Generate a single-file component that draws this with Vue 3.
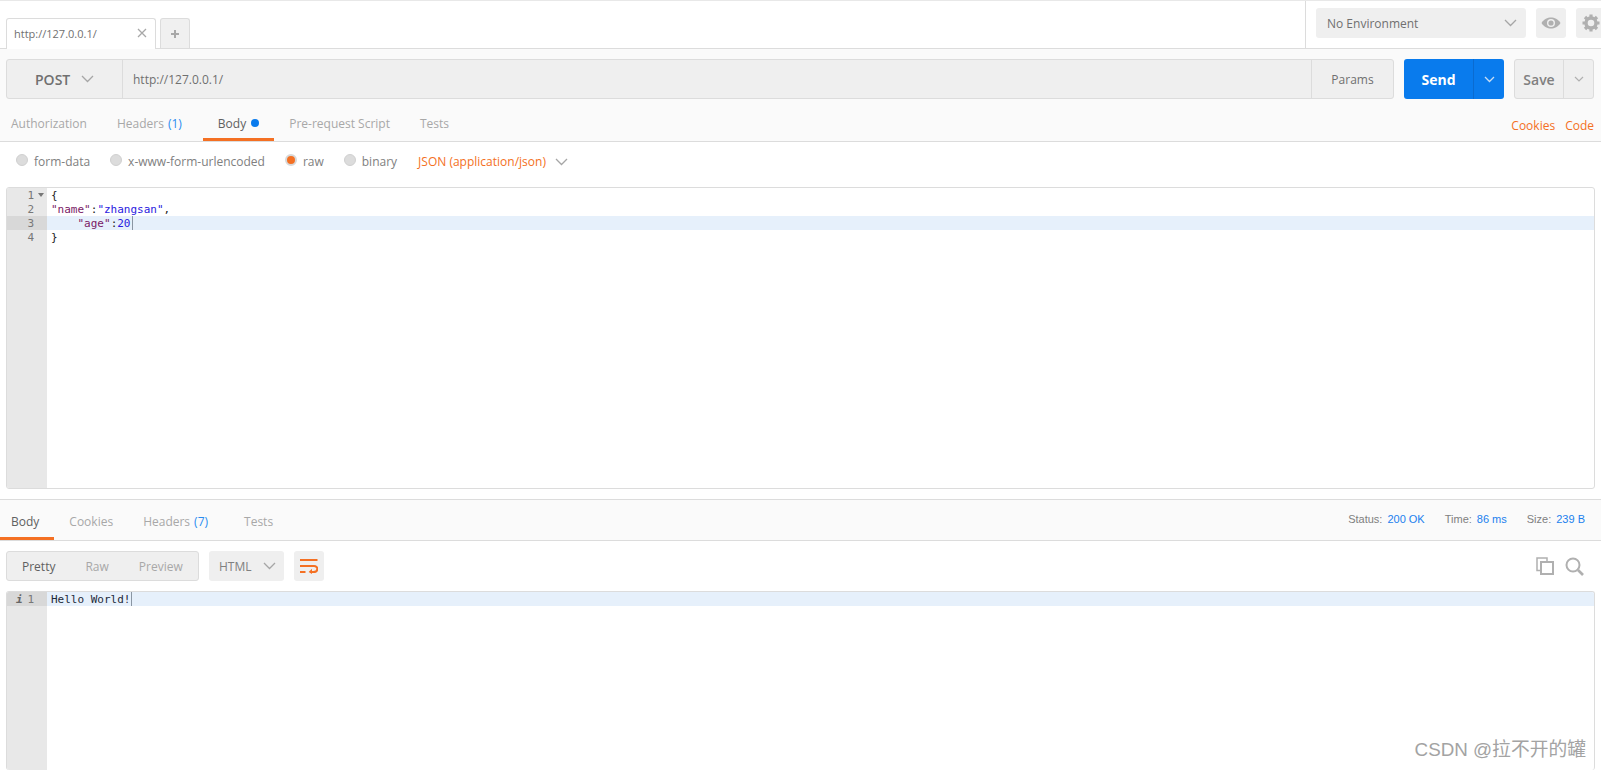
<script setup>
const reqTabs = [
  { label: 'Authorization' },
  { label: 'Headers', count: '(1)' },
  { label: 'Body', dot: true, active: true },
  { label: 'Pre-request Script' },
  { label: 'Tests' }
]
const bodyTypes = [
  { label: 'form-data' },
  { label: 'x-www-form-urlencoded' },
  { label: 'raw', on: true },
  { label: 'binary' }
]
const resTabs = [
  { label: 'Body', active: true },
  { label: 'Cookies' },
  { label: 'Headers', count: '(7)' },
  { label: 'Tests' }
]
const stats = [
  { k: 'Status:', v: '200 OK' },
  { k: 'Time:', v: '86 ms' },
  { k: 'Size:', v: '239 B' }
]
</script>

<template>
  <div class="app">
    <header class="topbar">
      <div class="tabstrip">
        <div class="tab">
          <span class="tab-title">http://127.0.0.1/</span>
          <svg class="tab-x" width="10" height="10" viewBox="0 0 10 10"><path d="M1 1l8 8M9 1l-8 8" stroke="#a8a8a8" stroke-width="1.3" fill="none"/></svg>
        </div>
        <div class="tab-add">
          <svg width="10" height="10" viewBox="0 0 10 10"><path d="M5 1v8M1 5h8" stroke="#a8a8a8" stroke-width="2" fill="none"/></svg>
        </div>
      </div>
      <div class="envbar">
        <div class="env">
          <span>No Environment</span>
          <svg width="13" height="8" viewBox="0 0 13 8"><path d="M1 1l5.5 5.5L12 1" stroke="#a6a6a6" stroke-width="1.3" fill="none"/></svg>
        </div>
        <div class="sq">
          <svg width="20" height="12" viewBox="0 0 20 12"><path d="M0.500 6C3 2 6.500 0.500 10 0.500S17 2 19.500 6C17 10 13.500 11.500 10 11.500S3 10 0.500 6Z" fill="#b0b0b0"/><circle cx="10" cy="6" r="4" fill="#efefef"/><circle cx="10" cy="6" r="2.600" fill="#b0b0b0"/></svg>
        </div>
        <div class="sq gear">
          <svg width="18" height="18" viewBox="0 0 18 18"><circle cx="9" cy="9" r="5" fill="none" stroke="#b0b0b0" stroke-width="3.400"/><g stroke="#b0b0b0" stroke-width="3.200"><path d="M9 0.500v3M9 14.500v3M0.500 9h3M14.500 9h3M3 3l2 2M13 13l2 2M15 3l-2 2M5 13l-2 2"/></g></svg>
        </div>
      </div>
    </header>

    <section class="request">
      <div class="urlrow">
        <div class="urlbox">
          <div class="method">
            <span>POST</span>
            <svg width="13" height="8" viewBox="0 0 13 8"><path d="M1 1l5.500 5.500L12 1" stroke="#a6a6a6" stroke-width="1.300" fill="none"/></svg>
          </div>
          <div class="url">http://127.0.0.1/</div>
          <div class="params">Params</div>
        </div>
        <div class="send">
          <span class="send-main">Send</span>
          <span class="send-more">
            <svg width="11" height="7" viewBox="0 0 11 7"><path d="M1 1l4.500 4.500L10 1" stroke="#c9ddf3" stroke-width="1.300" fill="none"/></svg>
          </span>
        </div>
        <div class="save">
          <span class="save-main">Save</span>
          <span class="save-more">
            <svg width="10" height="6" viewBox="0 0 10 6"><path d="M1 1l4 4 4-4" stroke="#b0b0b0" stroke-width="1.200" fill="none"/></svg>
          </span>
        </div>
      </div>
      <nav class="tabs req-tabs">
        <div v-for="t in reqTabs" :key="t.label" class="tb" :class="{ active: t.active }">
          {{ t.label }}
          <span v-if="t.count" class="count">{{ t.count }}</span>
          <i v-if="t.dot" class="dot"></i>
        </div>
        <div class="links"><span>Cookies</span><span>Code</span></div>
      </nav>
    </section>

    <div class="options">
      <label v-for="b in bodyTypes" :key="b.label" class="radio">
        <i class="circle" :class="{ on: b.on }"></i>{{ b.label }}
      </label>
      <span class="json">JSON (application/json)</span>
      <svg width="13" height="8" viewBox="0 0 13 8"><path d="M1 1l5.500 5.500L12 1" stroke="#a6a6a6" stroke-width="1.300" fill="none"/></svg>
    </div>

    <div class="editor req-editor">
      <div class="gutter">
        <div class="gl">1<svg class="fold" width="6" height="4" viewBox="0 0 6 4"><path d="M0 0h6L3 4Z" fill="#777"/></svg></div>
        <div class="gl">2</div>
        <div class="gl cur">3</div>
        <div class="gl">4</div>
      </div>
      <div class="code">
        <div class="ln">{</div>
        <div class="ln"><span class="key">"name"</span>:<span class="str">"zhangsan"</span>,</div>
        <div class="ln cur"><span class="indent"></span><span class="key">"age"</span>:<span class="num">20</span><i class="caret"></i></div>
        <div class="ln">}</div>
      </div>
    </div>

    <section class="resp-head">
      <nav class="tabs res-tabs">
        <div v-for="t in resTabs" :key="t.label" class="tb" :class="{ active: t.active }">
          {{ t.label }}
          <span v-if="t.count" class="count">{{ t.count }}</span>
        </div>
        <div class="stats">
          <span v-for="s in stats" :key="s.k" class="stat"><span class="k">{{ s.k }}</span><span class="v">{{ s.v }}</span></span>
        </div>
      </nav>
    </section>

    <div class="toolbar">
      <div class="seg">
        <span class="sel">Pretty</span><span>Raw</span><span>Preview</span>
      </div>
      <div class="lang">
        <span>HTML</span>
        <svg width="13" height="8" viewBox="0 0 13 8"><path d="M1 1l5.500 5.500L12 1" stroke="#a6a6a6" stroke-width="1.300" fill="none"/></svg>
      </div>
      <div class="wrap">
        <svg width="18" height="15" viewBox="0 0 18 15"><path d="M0 1h17.500M0 7h14M0 13h5.500" stroke="#f47023" stroke-width="2" fill="none"/><path d="M13.500 7h.5c4.500 0 4.500 6-.5 6H10" stroke="#f47023" stroke-width="2" fill="none"/><path d="M12 9.800L8.600 13l3.400 2Z" fill="#f47023"/></svg>
      </div>
      <div class="tools">
        <svg width="18" height="18" viewBox="0 0 18 18"><path d="M4.500 13.500H1V1h10v3.500" fill="none" stroke="#b0b0b0" stroke-width="1.500"/><rect x="5" y="5" width="12" height="12" fill="none" stroke="#b0b0b0" stroke-width="2"/></svg>
        <svg width="19" height="19" viewBox="0 0 19 19"><circle cx="8" cy="8" r="6.500" fill="none" stroke="#b0b0b0" stroke-width="2"/><path d="M13 13l5 5" stroke="#b0b0b0" stroke-width="2.600"/></svg>
      </div>
    </div>

    <div class="editor res-editor">
      <div class="gutter">
        <div class="gl cur"><span class="i">i</span>1</div>
      </div>
      <div class="code">
        <div class="ln cur hello">Hello World!<i class="caret"></i></div>
      </div>
    </div>

    <div class="watermark">CSDN @拉不开的罐</div>
  </div>
</template>

<style>
html, body { margin: 0; background: #fff; overflow: hidden; }
</style>

<style scoped>
.app {
  width: 1601px;
  height: 770px;
  display: flex;
  flex-direction: column;
  position: relative;
  overflow: hidden;
  background: #fff;
  font-family: "Open Sans", "Noto Sans", sans-serif;
  font-size: 12px;
  color: #808080;
}
svg { display: block; flex: none; }

.topbar {
  height: 47px;
  display: flex;
  justify-content: space-between;
  border-top: 1px solid #e8e8e8;
  border-bottom: 1px solid #dcdcdc;
  flex: none;
}
.tabstrip {
  display: flex;
  align-items: flex-end;
  gap: 4px;
  padding-left: 6px;
}
.tab {
  width: 150px;
  height: 31px;
  box-sizing: border-box;
  border: 1px solid #dcdcdc;
  border-bottom: none;
  border-radius: 3px 3px 0 0;
  display: flex;
  align-items: center;
  justify-content: space-between;
  padding: 0 8px 2px 7px;
  font-size: 11px;
  color: #707070;
  background: #fff;
  margin-bottom: -1px;
}
.tab-add {
  width: 30px;
  height: 30px;
  box-sizing: border-box;
  border: 1px solid #dcdcdc;
  border-bottom: none;
  border-radius: 3px 3px 0 0;
  background: #f0f0f0;
  display: flex;
  align-items: center;
  justify-content: center;
}
.envbar {
  width: 296px;
  box-sizing: border-box;
  border-left: 1px solid #dcdcdc;
  display: flex;
  align-items: flex-start;
  padding: 7px 0 0 10px;
  gap: 10px;
}
.env {
  width: 210px;
  height: 30px;
  flex: none;
  box-sizing: border-box;
  border-radius: 3px;
  background: #efefef;
  display: flex;
  align-items: center;
  justify-content: space-between;
  padding: 0 9px 0 11px;
  font-size: 12px;
  color: #707070;
}
.sq {
  width: 30px;
  height: 30px;
  flex: none;
  border-radius: 3px;
  background: #efefef;
  display: flex;
  align-items: center;
  justify-content: center;
}

.request {
  flex: none;
  background: #fafafa;
  border-bottom: 1px solid #dcdcdc;
  height: 92px;
  display: flex;
  flex-direction: column;
}
.urlrow {
  display: flex;
  padding: 10px 7px 0 6px;
  gap: 10px;
  flex: none;
}
.urlbox {
  flex: 1;
  height: 40px;
  box-sizing: border-box;
  border: 1px solid #dcdcdc;
  border-radius: 3px;
  background: #efefef;
  display: flex;
  align-items: center;
}
.method {
  width: 116px;
  height: 100%;
  box-sizing: border-box;
  border-right: 1px solid #dcdcdc;
  display: flex;
  align-items: center;
  padding-left: 28px;
  gap: 11px;
  font-size: 14px;
  font-weight: 600;
  color: #707070;
}
.url { flex: 1; padding-left: 10px; color: #707070; font-size: 12px; }
.params {
  width: 82px;
  height: 100%;
  box-sizing: border-box;
  border-left: 1px solid #dcdcdc;
  display: flex;
  align-items: center;
  justify-content: center;
  font-size: 12px;
  color: #707070;
}
.send {
  width: 100px;
  height: 40px;
  flex: none;
  border-radius: 3px;
  background: #097bed;
  display: flex;
  color: #fff;
  font-size: 14px;
  font-weight: 700;
}
.send-main { width: 69px; display: flex; align-items: center; justify-content: center; }
.send-more {
  flex: 1;
  border-left: 1px solid #0a6bd0;
  display: flex;
  align-items: center;
  justify-content: center;
}
.save {
  width: 80px;
  height: 40px;
  box-sizing: border-box;
  flex: none;
  border: 1px solid #dcdcdc;
  border-radius: 3px;
  background: #efefef;
  display: flex;
  font-size: 14px;
  font-weight: 600;
  color: #808080;
}
.save-main { width: 48px; display: flex; align-items: center; justify-content: center; }
.save-more {
  flex: 1;
  border-left: 1px solid #dcdcdc;
  display: flex;
  align-items: center;
  justify-content: center;
}

.tabs { display: flex; align-items: stretch; }
.req-tabs { height: 42px; flex: none; }
.tb {
  position: relative;
  display: flex;
  align-items: center;
  gap: 4px;
  padding: 6px 15px 0;
  color: #a8a8a8;
  font-size: 12px;
  white-space: nowrap;
}
.req-tabs .tb:first-child { padding-left: 11px; }
.req-tabs .tb:nth-child(3) { margin-left: 6px; gap: 5px; }
.tb.active { color: #606060; }
.tb.active::after {
  content: "";
  position: absolute;
  left: 0;
  right: 0;
  bottom: 0;
  height: 3px;
  background: #f47023;
}
.count { color: #2a8cf0; }
.dot { width: 8px; height: 8px; border-radius: 50%; background: #097bed; }
.links {
  margin-left: auto;
  display: flex;
  align-items: center;
  gap: 10px;
  padding: 10px 7px 0 0;
  color: #f47023;
}

.options {
  flex: none;
  height: 39px;
  padding-bottom: 6px;
  display: flex;
  align-items: center;
  padding-left: 16px;
  color: #808080;
}
.radio { display: flex; align-items: center; gap: 6px; margin-right: 20px; position: relative; }
.circle {
  width: 12px;
  height: 12px;
  box-sizing: border-box;
  border-radius: 50%;
  background: #dcdcdc;
  border: 1px solid #d0d0d0;
  margin-top: -4px;
}
.circle.on { background: #f47023; border: 2px solid #d8d8d8; }
.json { color: #f47023; margin-left: 1px; margin-right: 9px; }

.editor {
  display: flex;
  margin: 0 6px;
  box-sizing: border-box;
  border: 1px solid #dcdcdc;
  border-radius: 3px;
  background: #fff;
  font-family: "DejaVu Sans Mono", monospace;
  font-size: 11px;
  overflow: hidden;
}
.req-editor { flex: none; height: 302px; }
.res-editor { flex: 1; border-bottom: none; }
.gutter {
  width: 40px;
  flex: none;
  background: #e8e8e8;
  color: #777;
  text-align: right;
}
.gl { height: 14px; line-height: 16px; padding-right: 13px; position: relative; }
.gl.cur { background: #d8d8d8; }
.fold { position: absolute; right: 3px; top: 5px; }
.i { position: absolute; left: 9px; top: 0; font-weight: 700; font-style: italic; color: #666; }
.code { flex: 1; min-width: 0; color: #222; }
.ln { height: 14px; line-height: 16px; padding-left: 4px; white-space: pre; position: relative; }
.ln.cur { background: #e6f0fb; }
.indent { display: inline-block; width: 26.500px; }
.hello { color: #1d2a3a; }
.key { color: #7a1a66; }
.str { color: #2a1ae0; }
.num { color: #2a1ae0; }
.caret {
  display: inline-block;
  width: 1px;
  height: 14px;
  background: #8a96a3;
  vertical-align: top;
  margin-left: 1px;
}

.resp-head {
  flex: none;
  margin-top: 10px;
  height: 40px;
  background: #fafafa;
  border-top: 1px solid #dcdcdc;
  border-bottom: 1px solid #dcdcdc;
}
.res-tabs { height: 40px; }
.res-tabs .tb { padding-top: 3px; }
.res-tabs .tb:first-child { padding-left: 11px; padding-right: 15px; }
.res-tabs .tb:nth-child(4) { margin-left: 6px; }
.stats {
  margin-left: auto;
  display: flex;
  align-items: center;
  gap: 20px;
  padding-right: 16px;
  font-family: "Liberation Sans", sans-serif;
  font-size: 11px;
  margin-top: -3px;
}
.stat { display: flex; gap: 5px; }
.k { color: #808080; }
.v { color: #1b80ee; }

.toolbar {
  flex: none;
  height: 50px;
  display: flex;
  align-items: center;
  padding: 0 0 0 6px;
  gap: 10px;
}
.seg {
  width: 193px;
  height: 30px;
  box-sizing: border-box;
  border: 1px solid #dcdcdc;
  border-radius: 3px;
  background: #efefef;
  display: flex;
  align-items: center;
  padding-left: 15px;
  gap: 30px;
  color: #a8a8a8;
}
.sel { color: #606060; }
.lang {
  width: 75px;
  height: 30px;
  box-sizing: border-box;
  border-radius: 3px;
  background: #efefef;
  display: flex;
  align-items: center;
  padding-left: 10px;
  gap: 11px;
  color: #808080;
}
.wrap {
  width: 30px;
  height: 30px;
  border-radius: 3px;
  background: #efefef;
  display: flex;
  align-items: center;
  justify-content: center;
}
.tools {
  margin-left: auto;
  display: flex;
  align-items: center;
  gap: 11px;
  padding-right: 17px;
}
.watermark {
  position: absolute;
  right: 15px;
  bottom: 8px;
  font-family: "Liberation Sans", "Noto Sans CJK SC", sans-serif;
  font-size: 18.800px;
  line-height: 24px;
  color: #a3a3a3;
}
</style>
